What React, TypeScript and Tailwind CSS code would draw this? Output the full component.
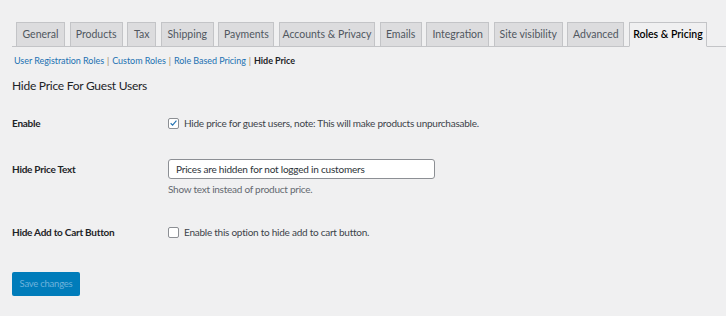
import { useState } from "react";

const TABS = [
  { label: "General", width: "w-[49px]" },
  { label: "Products", width: "w-[53px]" },
  { label: "Tax", width: "w-[29px]" },
  { label: "Shipping", width: "w-[53px]" },
  { label: "Payments", width: "w-[56px]" },
  { label: "Accounts & Privacy", width: "w-[96px]" },
  { label: "Emails", width: "w-[42px]" },
  { label: "Integration", width: "w-[63px]" },
  { label: "Site visibility", width: "w-[69px]" },
  { label: "Advanced", width: "w-[57px]" },
  { label: "Roles & Pricing", width: "w-[78px]", active: true },
];

const SUB_LINKS = ["User Registration Roles", "Custom Roles", "Role Based Pricing"];

function Checkbox({ checked, onChange }: { checked: boolean; onChange: () => void }) {
  return (
    <button
      type="button"
      onClick={onChange}
      className="flex h-[11px] w-[11px] shrink-0 items-center justify-center rounded-[2px] border border-[#8c8f94] bg-white"
    >
      {checked && (
        <svg viewBox="0 0 12 12" className="h-[10px] w-[10px]">
          <path d="M2.2 6.3 L4.8 8.8 L9.9 2.8" fill="none" stroke="#2271b1" strokeWidth="1.5" />
        </svg>
      )}
    </button>
  );
}

export default function App() {
  const [hidePrice, setHidePrice] = useState(true);
  const [hideCart, setHideCart] = useState(false);
  const [priceText, setPriceText] = useState("Prices are hidden for not logged in customers");

  return (
    <div className="min-h-[316px] w-full bg-[#f0f0f1] font-['Lato',sans-serif] text-[10px] tracking-[-0.25px] text-[#3c434a]">
      {/* settings tabs */}
      <div className="pt-[22px] pl-[12px]">
        <div className="flex h-[25px] items-end gap-[4.6px] border-b border-[#c3c4c7] pl-[4px]">
          {TABS.map((tab) => (
            <div
              key={tab.label}
              className={
                tab.active
                  ? `-mb-px flex h-[25px] ${tab.width} shrink-0 items-center justify-center border border-[#c3c4c7] border-b-[#f0f0f1] bg-[#f0f0f1] text-[10.5px] font-semibold tracking-normal text-black`
                  : `-mb-px flex h-[25px] ${tab.width} shrink-0 items-center justify-center border border-[#c3c4c7] bg-[#dcdcde] text-[10.5px] tracking-normal text-[#50575e]`
              }
            >
              <span className="whitespace-nowrap">{tab.label}</span>
            </div>
          ))}
        </div>
      </div>

      {/* sub navigation */}
      <div className="mt-[6px] flex pl-[14px] text-[9px] leading-[16px] tracking-[-0.05px]">
        {SUB_LINKS.map((link) => (
          <span key={link} className="flex">
            <span className="text-[#2271b1]">{link}</span>
            <span className="mx-[3px] text-[#a0825f]">|</span>
          </span>
        ))}
        <span className="font-bold text-[#1d2327]">Hide Price</span>
      </div>

      <h2 className="mt-[8px] pl-[12px] text-[12px] leading-[18px] text-[#1d2327]">
        Hide Price For Guest Users
      </h2>

      {/* form rows */}
      <div className="mt-[20px] flex items-center pl-[12px] leading-[16px]">
        <div className="w-[156px] font-bold text-[#1d2327]">Enable</div>
        <label className="flex items-center gap-[5px]">
          <Checkbox checked={hidePrice} onChange={() => setHidePrice(!hidePrice)} />
          <span>Hide price for guest users, note: This will make products unpurchasable.</span>
        </label>
      </div>

      <div className="mt-[28px] flex pl-[12px] leading-[16px]">
        <div className="w-[156px] pt-[2px] font-bold text-[#1d2327]">Hide Price Text</div>
        <div className="flex flex-col">
          <input
            value={priceText}
            onChange={(e) => setPriceText(e.target.value)}
            className="h-[20px] w-[267px] rounded-[3px] border border-[#8c8f94] bg-white px-[7px] text-[10px] tracking-[-0.2px] text-[#2c3338] outline-none"
          />
          <p className="mt-[2px] text-[#646970]">Show text instead of product price.</p>
        </div>
      </div>

      <div className="mt-[27px] flex items-center pl-[12px] leading-[16px]">
        <div className="w-[156px] font-bold text-[#1d2327]">Hide Add to Cart Button</div>
        <label className="flex items-center gap-[5px]">
          <Checkbox checked={hideCart} onChange={() => setHideCart(!hideCart)} />
          <span>Enable this option to hide add to cart button.</span>
        </label>
      </div>

      <div className="mt-[32px] pl-[12px]">
        <button
          type="button"
          disabled
          className="h-[24px] w-[68px] rounded-[2px] bg-[#007cba] text-[9.5px] text-[#6eb3dc]"
        >
          Save changes
        </button>
      </div>
    </div>
  );
}
